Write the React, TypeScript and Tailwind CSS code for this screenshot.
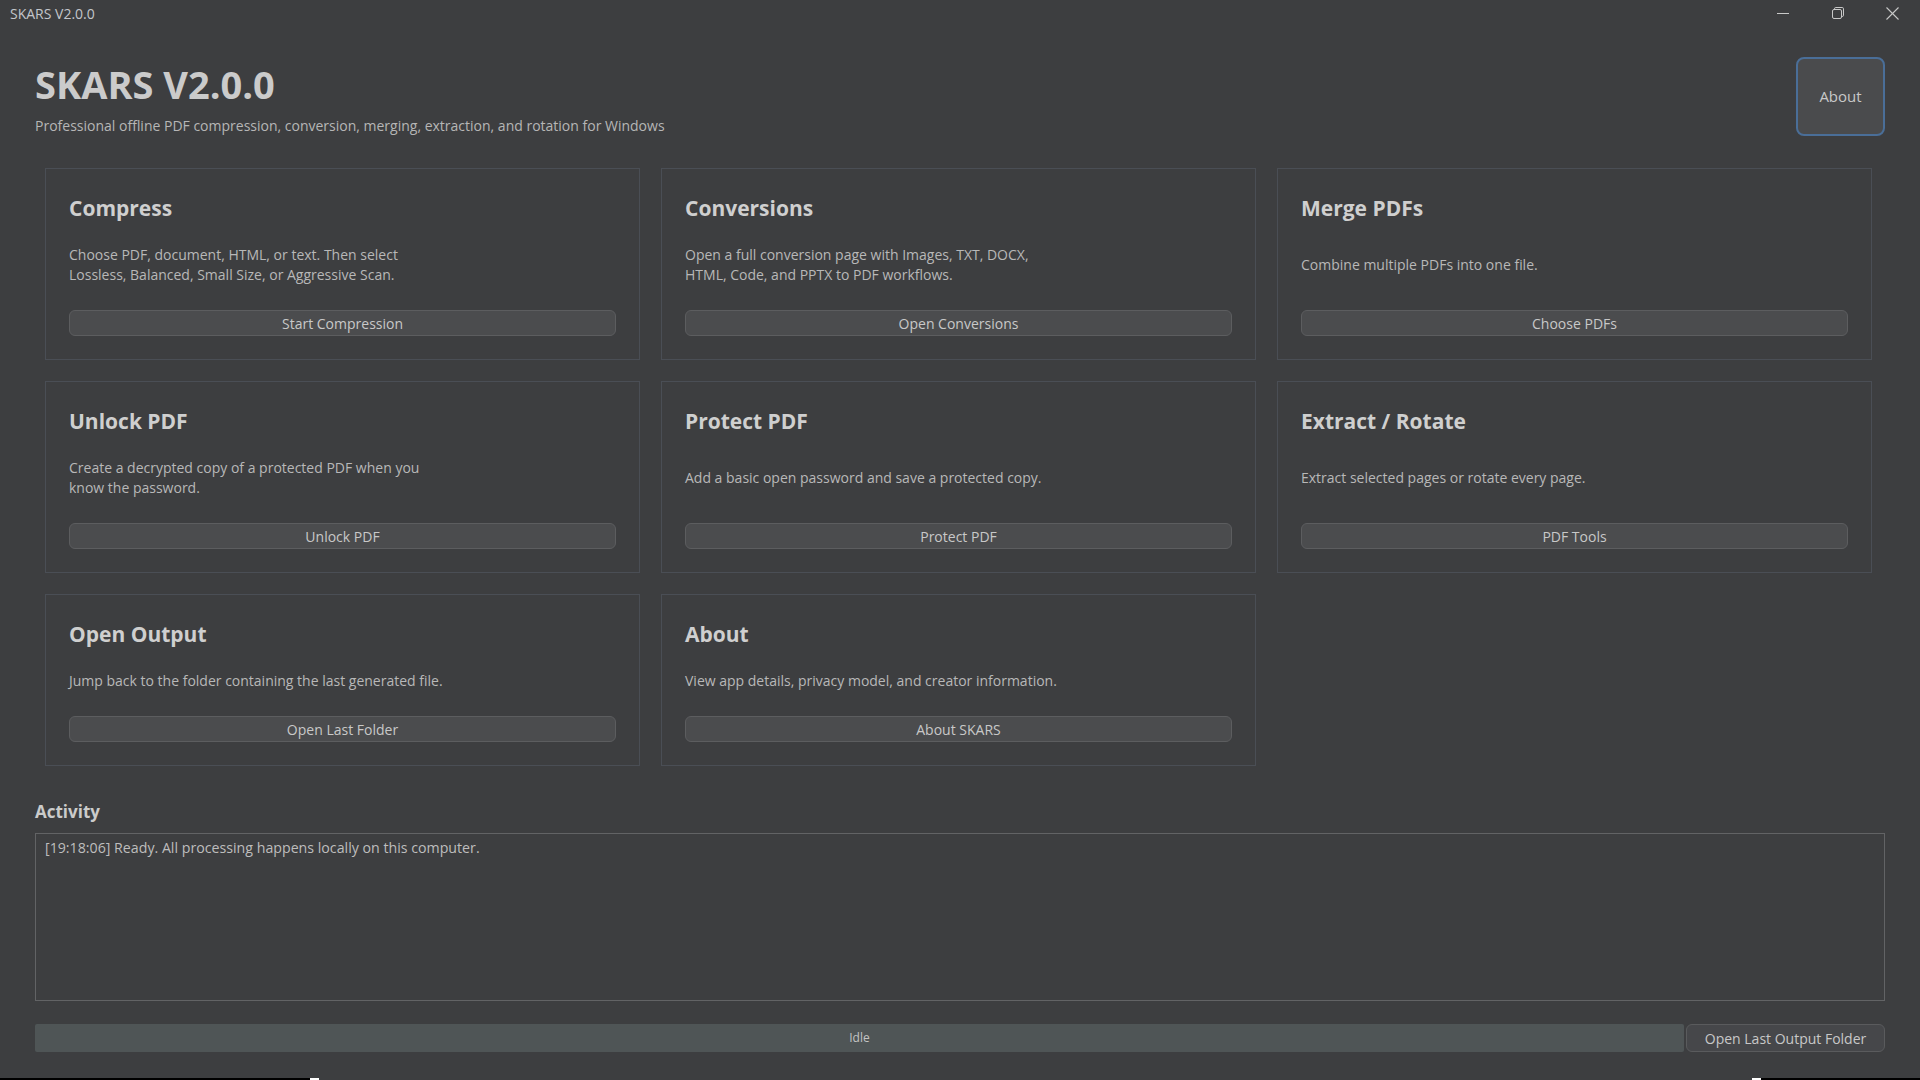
import React from "react";

const font = { fontFamily: '"Open Sans", "Noto Sans", sans-serif' };

type Card = { title: string; desc: string[]; button: string };

const cards: Card[] = [
  { title: "Compress", desc: ["Choose PDF, document, HTML, or text. Then select", "Lossless, Balanced, Small Size, or Aggressive Scan."], button: "Start Compression" },
  { title: "Conversions", desc: ["Open a full conversion page with Images, TXT, DOCX,", "HTML, Code, and PPTX to PDF workflows."], button: "Open Conversions" },
  { title: "Merge PDFs", desc: ["Combine multiple PDFs into one file."], button: "Choose PDFs" },
  { title: "Unlock PDF", desc: ["Create a decrypted copy of a protected PDF when you", "know the password."], button: "Unlock PDF" },
  { title: "Protect PDF", desc: ["Add a basic open password and save a protected copy."], button: "Protect PDF" },
  { title: "Extract / Rotate", desc: ["Extract selected pages or rotate every page."], button: "PDF Tools" },
  { title: "Open Output", desc: ["Jump back to the folder containing the last generated file."], button: "Open Last Folder" },
  { title: "About", desc: ["View app details, privacy model, and creator information."], button: "About SKARS" },
];

function CardView({ c }: { c: Card }) {
  return (
    <div className="flex flex-col border border-[#4a4e55] px-[23px] pt-[23px] pb-[23px]">
      <div className="flex h-[34px] items-center text-[21px] font-bold text-[#cfcfcf]">{c.title}</div>
      <div className="mt-[19px] mb-[25px] flex flex-1 items-center">
        <div className="text-[14px] leading-[20px] text-[#b8b8b8]">
          {c.desc.map((l, i) => (
            <div key={i}>{l}</div>
          ))}
        </div>
      </div>
      <button className="h-[26px] rounded-[6px] border border-[#5c5d5f] bg-[#4b4c4e] text-[14px] text-[#c8c8c8]">
        {c.button}
      </button>
    </div>
  );
}

export default function App() {
  return (
    <div className="relative flex h-[1080px] w-[1920px] flex-col overflow-hidden bg-[#3d3e40]" style={font}>
      {/* title bar */}
      <div className="flex h-[26px] items-center justify-between">
        <div className="pl-[10px] text-[14px] text-[#c3c6cb]">SKARS V2.0.0</div>
        <div className="flex h-full items-center">
          <div className="flex h-full w-[55px] items-center justify-center">
            <svg width="12" height="12" viewBox="0 0 12 12">
              <line x1="0" y1="6.5" x2="12" y2="6.5" stroke="#c8c8c8" strokeWidth="1" />
            </svg>
          </div>
          <div className="flex h-full w-[55px] items-center justify-center">
            <svg width="12" height="12" viewBox="0 0 12 12" fill="none" stroke="#c8c8c8" strokeWidth="1">
              <rect x="0.5" y="2.5" width="9" height="9" rx="1.5" />
              <path d="M2.5 2.5 V1.8 a1.3 1.3 0 0 1 1.3 -1.3 H10.2 a1.3 1.3 0 0 1 1.3 1.3 V8.2 a1.3 1.3 0 0 1 -1.3 1.3 H9.5" />
            </svg>
          </div>
          <div className="flex h-full w-[55px] items-center justify-center">
            <svg width="13" height="13" viewBox="0 0 13 13" stroke="#c8c8c8" strokeWidth="1.1">
              <line x1="0.5" y1="0.5" x2="12.5" y2="12.5" />
              <line x1="12.5" y1="0.5" x2="0.5" y2="12.5" />
            </svg>
          </div>
        </div>
      </div>

      <div className="flex flex-1 flex-col px-[35px]">
        {/* header */}
        <div className="flex items-start justify-between">
          <div className="pt-[36px]">
            <div className="text-[38px] font-bold leading-[44px] text-[#cbcbcb]">SKARS V2.0.0</div>
            <div className="mt-[10px] text-[14px] leading-[20px] text-[#b6b6b6]">
              Professional offline PDF compression, conversion, merging, extraction, and rotation for Windows
            </div>
          </div>
          <button className="mt-[31px] h-[79px] w-[89px] rounded-[8px] border-2 border-[#4a6e98] bg-[#4a4b4d] text-[15px] text-[#c8c8c8]">
            About
          </button>
        </div>

        {/* cards */}
        <div className="mt-[32px] ml-[10px] mr-[13px] grid grid-cols-3 gap-[21px]">
          {cards.map((c) => (
            <CardView key={c.title} c={c} />
          ))}
        </div>

        {/* activity */}
        <div className="mt-[34px] text-[17px] font-bold leading-[24px] text-[#cbcbcb]">Activity</div>
        <div className="mt-[9px] h-[168px] border border-[#626365] px-[9px] pt-[4px] text-[14.2px] leading-[20px] text-[#bdbdbd]">
          [19:18:06] Ready. All processing happens locally on this computer.
        </div>

        <div className="mt-[23px] flex h-[28px]">
          <div className="flex flex-1 items-center justify-center rounded-[2px] bg-[#4f5556] text-[12px] text-[#c4c4c4]">
            Idle
          </div>
          <button className="ml-[2px] w-[199px] rounded-[6px] border border-[#5a5b5d] bg-[#46474a] text-[14px] text-[#c8c8c8]">
            Open Last Output Folder
          </button>
        </div>
      </div>

      <div className="absolute bottom-0 left-0 flex h-[2px] w-full">
        <div className="w-[310px] bg-black" />
        <div className="w-[9px] bg-white" />
        <div className="flex-1" />
        <div className="w-[9px] bg-white" />
        <div className="w-[159px] bg-black" />
      </div>
    </div>
  );
}
